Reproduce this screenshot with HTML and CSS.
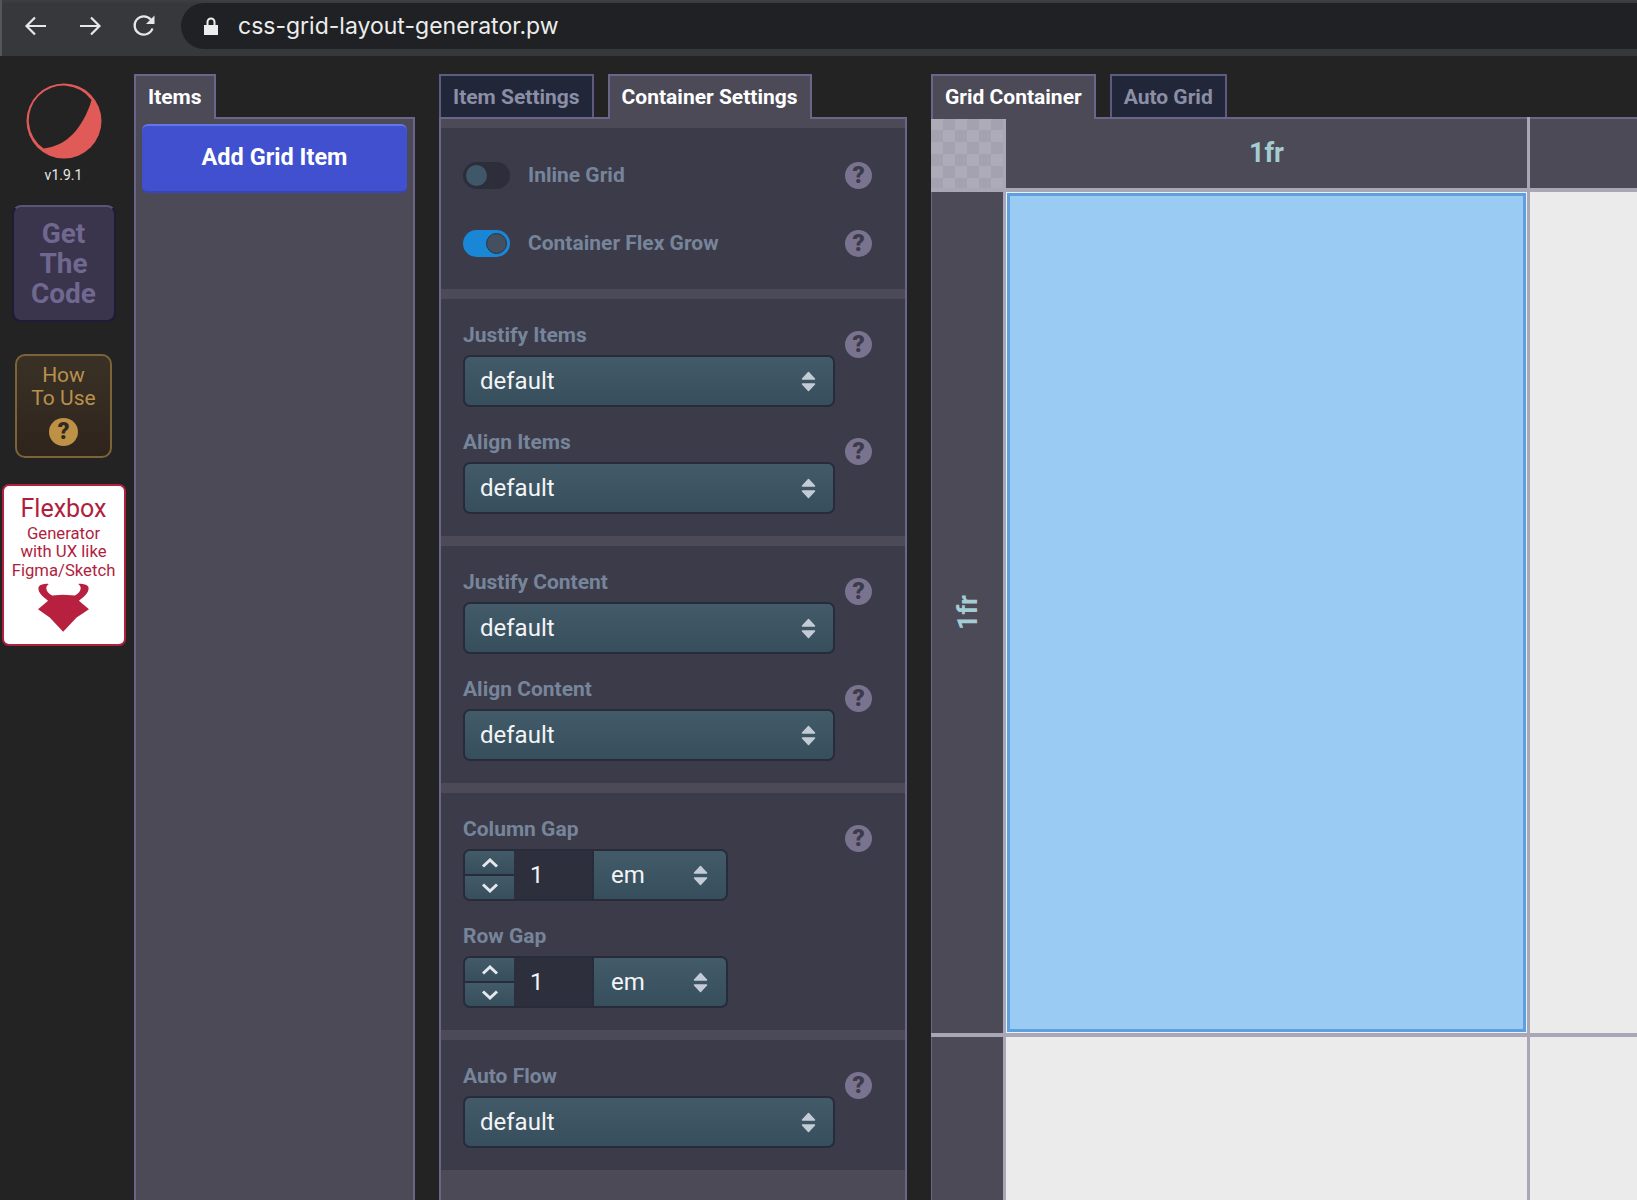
FILE: index.html
```html
<!DOCTYPE html>
<html lang="en">
<head>
    <meta charset="UTF-8">
    <meta name="viewport" content="width=device-width, initial-scale=1.0">
    <title>CSS Grid Layout Generator</title>
    <link rel="stylesheet" href="styles.css">
</head>
<body>
    <div class="toolbar">
        <svg class="nav-icon" viewBox="0 0 24 24"><path d="M22 12H3M11 3.5 2.5 12l8.5 8.5"/></svg>
        <svg class="nav-icon" viewBox="0 0 24 24"><path d="M2 12h19M13 3.5l8.5 8.5-8.5 8.5"/></svg>
        <svg class="nav-icon" viewBox="0 0 24 24"><path d="M20.5 14.5A9.2 9.2 0 1 1 18.8 5.5"/><path class="nav-fill" d="M22.5 1.5V10H14z"/></svg>
        <div class="url-bar">
            <svg class="lock" viewBox="0 0 14 18"><path d="M0 8h14v10H0z"/><path class="lock-bow" d="M3.5 8V5a3.5 3.5 0 0 1 7 0v3"/></svg>
            <span>css-grid-layout-generator.pw</span>
        </div>
    </div>

    <div class="app">
        <div class="sidebar">
            <svg class="logo" viewBox="0 0 76 76">
                <circle cx="38" cy="38" r="37.5" fill="#e05a58"/>
                <path fill="#232323" d="M65.5 17A34.6 34.6 0 1 0 17.5 65.5C30 64 39 59 47 51C54 44 62 30 65.5 17Z"/>
            </svg>
            <div class="version">v1.9.1</div>
            <div class="get-code">Get The Code</div>
            <div class="how-to">
                How<br>To Use
                <div class="how-icon">?</div>
            </div>
            <div class="flexbox-ad">
                <div class="flexbox-title">Flexbox</div>
                <div class="flexbox-sub">Generator<br>with UX like<br>Figma/Sketch</div>
                <svg class="bull" viewBox="0 0 152 144"><path d="M32 2C24 0 8 2 2 10C-2 24 10 36 30 52L0 77L35 102L75 144L115 102L152 77L122 52C142 36 154 24 150 10C144 2 128 0 120 2C134 12 126 28 110 36L75 34L42 36C26 28 18 12 32 2Z"/></svg>
            </div>
        </div>

        <div class="column items-col">
            <div class="tabs">
                <div class="tab active">Items</div>
            </div>
            <div class="panel items-panel">
                <div class="add-btn">Add Grid Item</div>
            </div>
        </div>

        <div class="column settings-col">
            <div class="tabs">
                <div class="tab">Item Settings</div>
                <div class="tab active">Container Settings</div>
            </div>
            <div class="panel settings-panel">
                <div class="section toggles">
                    <div class="toggle-row">
                        <div class="switch"><div class="knob"></div></div>
                        <div class="label">Inline Grid</div>
                        <div class="help">?</div>
                    </div>
                    <div class="toggle-row">
                        <div class="switch on"><div class="knob"></div></div>
                        <div class="label">Container Flex Grow</div>
                        <div class="help">?</div>
                    </div>
                </div>

                <div class="section">
                    <div class="field">
                        <div class="field-main">
                            <div class="label">Justify Items</div>
                            <div class="select"><span>default</span><svg class="caret" viewBox="0 0 15 21"><path d="M7.5 1.5 13.5 8H1.5ZM1.5 13H13.5L7.5 19.5Z"/></svg></div>
                        </div>
                        <div class="help">?</div>
                    </div>
                    <div class="field">
                        <div class="field-main">
                            <div class="label">Align Items</div>
                            <div class="select"><span>default</span><svg class="caret" viewBox="0 0 15 21"><path d="M7.5 1.5 13.5 8H1.5ZM1.5 13H13.5L7.5 19.5Z"/></svg></div>
                        </div>
                        <div class="help">?</div>
                    </div>
                </div>

                <div class="section">
                    <div class="field">
                        <div class="field-main">
                            <div class="label">Justify Content</div>
                            <div class="select"><span>default</span><svg class="caret" viewBox="0 0 15 21"><path d="M7.5 1.5 13.5 8H1.5ZM1.5 13H13.5L7.5 19.5Z"/></svg></div>
                        </div>
                        <div class="help">?</div>
                    </div>
                    <div class="field">
                        <div class="field-main">
                            <div class="label">Align Content</div>
                            <div class="select"><span>default</span><svg class="caret" viewBox="0 0 15 21"><path d="M7.5 1.5 13.5 8H1.5ZM1.5 13H13.5L7.5 19.5Z"/></svg></div>
                        </div>
                        <div class="help">?</div>
                    </div>
                </div>

                <div class="section">
                    <div class="field">
                        <div class="field-main">
                            <div class="label">Column Gap</div>
                            <div class="number-input">
                                <div class="stepper">
                                    <div class="step"><svg viewBox="0 0 18 10"><path d="M2 8.5 9 2l7 6.5"/></svg></div>
                                    <div class="step"><svg viewBox="0 0 18 10"><path d="M2 1.5 9 8l7-6.5"/></svg></div>
                                </div>
                                <div class="number">1</div>
                                <div class="unit"><span>em</span><svg class="caret" viewBox="0 0 15 21"><path d="M7.5 1.5 13.5 8H1.5ZM1.5 13H13.5L7.5 19.5Z"/></svg></div>
                            </div>
                        </div>
                        <div class="help">?</div>
                    </div>
                    <div class="field">
                        <div class="field-main">
                            <div class="label">Row Gap</div>
                            <div class="number-input">
                                <div class="stepper">
                                    <div class="step"><svg viewBox="0 0 18 10"><path d="M2 8.5 9 2l7 6.5"/></svg></div>
                                    <div class="step"><svg viewBox="0 0 18 10"><path d="M2 1.5 9 8l7-6.5"/></svg></div>
                                </div>
                                <div class="number">1</div>
                                <div class="unit"><span>em</span><svg class="caret" viewBox="0 0 15 21"><path d="M7.5 1.5 13.5 8H1.5ZM1.5 13H13.5L7.5 19.5Z"/></svg></div>
                            </div>
                        </div>
                    </div>
                </div>

                <div class="section">
                    <div class="field">
                        <div class="field-main">
                            <div class="label">Auto Flow</div>
                            <div class="select"><span>default</span><svg class="caret" viewBox="0 0 15 21"><path d="M7.5 1.5 13.5 8H1.5ZM1.5 13H13.5L7.5 19.5Z"/></svg></div>
                        </div>
                        <div class="help">?</div>
                    </div>
                </div>
            </div>
        </div>

        <div class="column grid-col">
            <div class="tabs">
                <div class="tab active">Grid Container</div>
                <div class="tab">Auto Grid</div>
            </div>
            <div class="grid-editor">
                <div class="corner"></div>
                <div class="col-head">1fr</div>
                <div class="col-head"></div>
                <div class="row-head"><span>1fr</span></div>
                <div class="cell"><div class="grid-item"></div></div>
                <div class="cell"></div>
                <div class="row-head"></div>
                <div class="cell"></div>
                <div class="cell"></div>
            </div>
        </div>
    </div>
</body>
</html>
```

FILE: styles.css
```css
* {
    box-sizing: border-box;
}
body {
    margin: 0;
    height: 1200px;
    overflow: hidden;
    display: flex;
    flex-direction: column;
    background-color: #232323;
    font-family: Roboto, "Liberation Sans", sans-serif;
}

/* browser bar */
.toolbar {
    height: 56px;
    flex: none;
    display: flex;
    align-items: center;
    padding: 0 0 4px 22px;
    background: linear-gradient(#3e3f43 0, #37383c 4px, #37383c 100%);
    border-left: 2px solid #55565a;
}
.nav-icon {
    width: 24px;
    height: 24px;
    margin-right: 30px;
    fill: none;
    stroke: #e6e7e9;
    stroke-width: 2.2;
}
.nav-fill {
    fill: #e6e7e9;
    stroke: none;
}
.url-bar {
    flex: 1;
    height: 46px;
    margin-left: -5px;
    padding-left: 23px;
    display: flex;
    align-items: center;
    gap: 20px;
    background-color: #202124;
    border-radius: 23px 0 0 23px;
    color: #eceded;
    font-family: Inter, Roboto, sans-serif;
    font-size: 23px;
}
.lock {
    width: 14px;
    height: 18px;
    fill: #eceded;
}
.lock-bow {
    fill: none;
    stroke: #eceded;
    stroke-width: 2;
}

.app {
    flex: 1;
    display: flex;
    min-height: 0;
    padding-top: 18px;
}

/* left rail */
.sidebar {
    width: 127px;
    margin-right: 7px;
    flex: none;
    display: flex;
    flex-direction: column;
    align-items: center;
}
.logo {
    width: 76px;
    height: 76px;
    margin-top: 9px;
}
.version {
    margin-top: 6px;
    color: #e8e8e8;
    font-size: 14px;
    line-height: 20px;
}
.get-code {
    width: 104px;
    height: 117px;
    margin-top: 20px;
    padding: 12px 4px 0;
    background-color: #3a344d;
    border: 2px solid #1d1b36;
    border-top-color: #5b5578;
    border-radius: 9px;
    color: #6f688f;
    font-size: 28px;
    font-weight: 700;
    line-height: 30px;
    text-align: center;
}
.how-to {
    width: 97px;
    height: 104px;
    margin-top: 32px;
    padding-top: 8px;
    background: linear-gradient(#3a3126, #2e241c);
    border: 2px solid #7c6338;
    border-radius: 10px;
    color: #b8914e;
    font-size: 21px;
    line-height: 23px;
    text-align: center;
}
.how-icon {
    width: 29px;
    height: 28px;
    margin: 8px auto 0;
    background-color: #bd9146;
    border-radius: 50%;
    color: #33291f;
    font-size: 23px;
    font-weight: 900;
    line-height: 28px;
}
.flexbox-ad {
    width: 124px;
    height: 162px;
    margin-top: 26px;
    padding-top: 8px;
    background-color: #fff;
    border: 2px solid #b3203f;
    border-radius: 7px;
    color: #b01e3e;
    text-align: center;
}
.flexbox-title {
    font-size: 25px;
    line-height: 30px;
}
.flexbox-sub {
    margin-top: 1px;
    font-size: 16.7px;
    line-height: 18.3px;
}
.bull {
    display: block;
    width: 51px;
    height: 49px;
    margin: 3px auto 0;
    fill: #b8203f;
}

/* tabbed columns */
.column {
    display: flex;
    flex-direction: column;
    flex: none;
}
.items-col {
    width: 281px;
    margin-right: 24px;
}
.settings-col {
    width: 468px;
    margin-right: 24px;
}
.grid-col {
    flex: 1;
    min-width: 0;
}
.tabs {
    height: 43px;
    flex: none;
    display: flex;
    gap: 14px;
    position: relative;
    z-index: 1;
}
.tab {
    padding: 0 12px;
    background-color: #222639;
    border: 2px solid #5f5b80;
    border-bottom: none;
    color: #8b8fa6;
    font-size: 21px;
    font-weight: 700;
    line-height: 42px;
}
.tab.active {
    height: 45px;
    background-color: #4c4a57;
    border-color: #6a668a;
    color: #fff;
}
.panel {
    flex: 1;
    min-height: 0;
    background-color: #4c4a57;
    border: 2px solid #6a668a;
    border-bottom: none;
}
.items-panel {
    padding: 5px 6px;
}
.add-btn {
    height: 69px;
    background-color: #4050cf;
    border-top: 2px solid #6577e6;
    border-bottom: 2px solid #3746b8;
    border-radius: 6px;
    color: #fff;
    font-size: 23.5px;
    font-weight: 700;
    line-height: 63px;
    text-align: center;
}

/* settings */
.settings-panel {
    padding-top: 9px;
}
.section {
    padding: 24px 22px 22px;
    margin-bottom: 10px;
    background-color: #3c3b4a;
}
.section.toggles {
    height: 161px;
    padding: 34px 22px 0;
}
.toggle-row {
    height: 27px;
    margin-bottom: 41px;
    display: flex;
    align-items: center;
}
.toggle-row .label {
    margin-left: 18px;
    line-height: 27px;
}
.toggle-row .help {
    margin: 0 11px 0 auto;
}
.switch {
    width: 47px;
    height: 27px;
    padding: 3px;
    background-color: #2c2e3a;
    border-radius: 14px;
}
.switch.on {
    display: flex;
    justify-content: flex-end;
    background-color: #1a86d6;
}
.knob {
    width: 21px;
    height: 21px;
    background-color: #40576a;
    border-radius: 50%;
}
.switch.on .knob {
    background-color: #44505f;
    border: 1px solid #2b3442;
}
.label {
    color: #76859a;
    font-size: 21px;
    font-weight: 700;
    line-height: 24px;
}
.field {
    display: flex;
    margin-bottom: 23px;
}
.field:last-child {
    margin-bottom: 0;
}
.field-main {
    width: 372px;
    display: flex;
    flex-direction: column;
    gap: 8px;
}
.help {
    width: 27px;
    height: 27px;
    margin: 8px 0 0 10px;
    flex: none;
    background-color: #7a7390;
    border-radius: 50%;
    color: #3c3b4a;
    font-size: 24px;
    font-weight: 900;
    line-height: 27px;
    text-align: center;
}
.select,
.unit {
    height: 52px;
    display: flex;
    align-items: center;
    justify-content: space-between;
    padding: 0 17px 0 15px;
    background: linear-gradient(#435a69, #374f5d);
    border: 2px solid #272b3a;
    border-radius: 7px;
    color: #f2f4f5;
    font-size: 24px;
}
.caret {
    width: 15px;
    height: 21px;
    fill: #c3ccd6;
    stroke: #c3ccd6;
    stroke-width: 1.5;
    stroke-linejoin: round;
}
.number-input {
    height: 52px;
    display: flex;
}
.stepper {
    width: 51px;
    display: flex;
    flex-direction: column;
    border: 2px solid #272b3a;
    border-right: none;
    border-radius: 7px 0 0 7px;
    overflow: hidden;
}
.step {
    flex: 1;
    display: flex;
    align-items: center;
    justify-content: center;
    background: linear-gradient(#435a69, #374f5d);
}
.step + .step {
    border-top: 2px solid #272b3a;
}
.step svg {
    width: 18px;
    height: 10px;
    fill: none;
    stroke: #e4e8ec;
    stroke-width: 3;
}
.number {
    width: 78px;
    padding-left: 16px;
    background-color: #2e2f3d;
    border-top: 2px solid #272b3a;
    border-bottom: 2px solid #272b3a;
    color: #f2f4f5;
    font-size: 24px;
    line-height: 48px;
}
.unit {
    width: 136px;
    padding: 0 18px 0 17px;
    border-radius: 0 7px 7px 0;
}

/* grid preview */
.grid-editor {
    flex: 1;
    min-height: 0;
    display: grid;
    grid-template-columns: 72px 521px 1fr;
    grid-template-rows: 71px 841px 1fr;
    gap: 4px 3px;
    background-color: #a9a6b5;
}
.corner {
    background-color: #a9a6b5;
    background-image: repeating-conic-gradient(#a4a1b1 0 25%, #aeabb9 0 50%);
    background-size: 24px 24px;
    border-top: 1px solid #a9a6b5;
}
.col-head {
    background-color: #4c4a57;
    border-top: 2px solid #6a668a;
    color: #a3cdd2;
    font-size: 27px;
    font-weight: 700;
    line-height: 68px;
    text-align: center;
}
.row-head {
    display: flex;
    align-items: center;
    justify-content: center;
    background-color: #4c4a57;
    border-left: 1px solid #6a668a;
    color: #a3cdd2;
    font-size: 27px;
    font-weight: 700;
}
.row-head span {
    writing-mode: vertical-rl;
    transform: rotate(180deg);
}
.cell {
    background-color: #ebebeb;
}
.grid-item {
    height: calc(100% - 2px);
    margin: 1px;
    background-color: #9acbf2;
    border: 3px solid #5f9fdd;
    box-shadow: 0 0 0 1px #e8f2fb;
}
```
